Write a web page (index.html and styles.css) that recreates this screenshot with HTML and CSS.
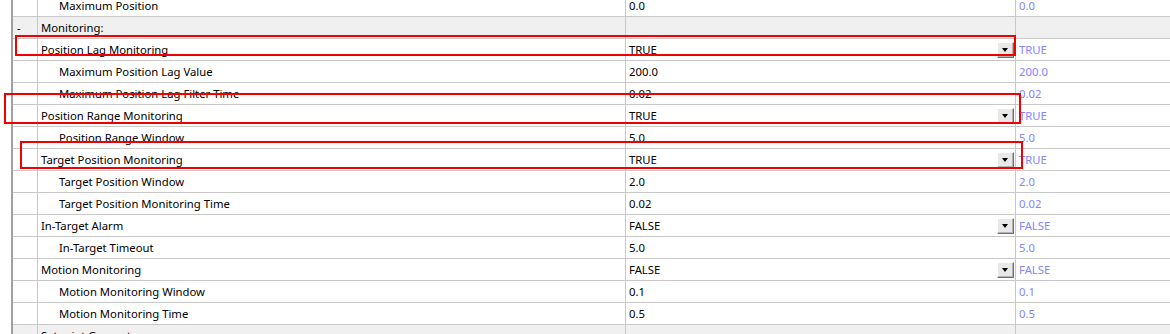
FILE: index.html
```html
<!DOCTYPE html>
<html lang="en">
<head>
    <meta charset="UTF-8">
    <title>Axis Parameters - Monitoring</title>
    <link rel="stylesheet" href="styles.css">
</head>
<body>
    <div class="view">
        <div class="grid">
            <div class="row">
                <div class="exp"></div>
                <div class="name child">Maximum Position</div>
                <div class="value">0.0</div>
                <div class="default">0.0</div>
            </div>
            <div class="row group">
                <div class="exp">-</div>
                <div class="name">Monitoring:</div>
                <div class="value"></div>
                <div class="default"></div>
            </div>
            <div class="row">
                <div class="exp"></div>
                <div class="name">Position Lag Monitoring</div>
                <div class="value"><span>TRUE</span><span class="drop"></span></div>
                <div class="default">TRUE</div>
            </div>
            <div class="row">
                <div class="exp"></div>
                <div class="name child">Maximum Position Lag Value</div>
                <div class="value">200.0</div>
                <div class="default">200.0</div>
            </div>
            <div class="row">
                <div class="exp"></div>
                <div class="name child">Maximum Position Lag Filter Time</div>
                <div class="value">0.02</div>
                <div class="default">0.02</div>
            </div>
            <div class="row">
                <div class="exp"></div>
                <div class="name">Position Range Monitoring</div>
                <div class="value"><span>TRUE</span><span class="drop"></span></div>
                <div class="default">TRUE</div>
            </div>
            <div class="row">
                <div class="exp"></div>
                <div class="name child">Position Range Window</div>
                <div class="value">5.0</div>
                <div class="default">5.0</div>
            </div>
            <div class="row">
                <div class="exp"></div>
                <div class="name">Target Position Monitoring</div>
                <div class="value"><span>TRUE</span><span class="drop"></span></div>
                <div class="default">TRUE</div>
            </div>
            <div class="row">
                <div class="exp"></div>
                <div class="name child">Target Position Window</div>
                <div class="value">2.0</div>
                <div class="default">2.0</div>
            </div>
            <div class="row">
                <div class="exp"></div>
                <div class="name child">Target Position Monitoring Time</div>
                <div class="value">0.02</div>
                <div class="default">0.02</div>
            </div>
            <div class="row">
                <div class="exp"></div>
                <div class="name">In-Target Alarm</div>
                <div class="value"><span>FALSE</span><span class="drop"></span></div>
                <div class="default">FALSE</div>
            </div>
            <div class="row">
                <div class="exp"></div>
                <div class="name child">In-Target Timeout</div>
                <div class="value">5.0</div>
                <div class="default">5.0</div>
            </div>
            <div class="row">
                <div class="exp"></div>
                <div class="name">Motion Monitoring</div>
                <div class="value"><span>FALSE</span><span class="drop"></span></div>
                <div class="default">FALSE</div>
            </div>
            <div class="row">
                <div class="exp"></div>
                <div class="name child">Motion Monitoring Window</div>
                <div class="value">0.1</div>
                <div class="default">0.1</div>
            </div>
            <div class="row">
                <div class="exp"></div>
                <div class="name child">Motion Monitoring Time</div>
                <div class="value">0.5</div>
                <div class="default">0.5</div>
            </div>
            <div class="row group">
                <div class="exp"></div>
                <div class="name">Setpoint Generator:</div>
                <div class="value"></div>
                <div class="default"></div>
            </div>
        </div>

        <!-- red highlight boxes drawn over the grid -->
        <div class="mark mark-lag"></div>
        <div class="mark mark-range"></div>
        <div class="mark mark-target"></div>
    </div>
</body>
</html>
```

FILE: styles.css
```css
* {
    margin: 0;
    padding: 0;
    box-sizing: border-box;
}

body {
    width: 1170px;
    height: 334px;
    overflow: hidden;
    background: #fff;
    font-family: "Noto Sans", "Open Sans", sans-serif;
    font-size: 11.3px;
    color: #000;
}

.view {
    position: relative;
    height: 334px;
    padding-left: 11px;
}

.grid {
    margin-top: -5px;
    border-left: 2px solid #a0a0a0;
}

.row {
    display: grid;
    grid-template-columns: 25px 588px 390px 1fr;
    height: 22px;
    border-bottom: 1px solid #c8c8c8;
}

.row > div {
    display: flex;
    align-items: center;
    white-space: nowrap;
    overflow: hidden;
    border-right: 1px solid #c8c8c8;
    padding-left: 3px;
}

.row > .default {
    border-right: 0;
    color: #8484ff;
}

.group {
    background: #f0f0f0;
}

.exp {
    padding-left: 4px !important;
}

.name.child {
    padding-left: 21px;
}

.value {
    justify-content: space-between;
    padding-right: 1px;
}

.drop {
    flex: none;
    position: relative;
    width: 17px;
    height: 16px;
    background: #e8e8e8;
    border-top: 1px solid #fff;
    border-left: 1px solid #fff;
    border-right: 1px solid #6e6e6e;
    border-bottom: 1px solid #6e6e6e;
    box-shadow: inset -1px -1px 0 #b4b4b4;
}

.drop::after {
    content: "";
    position: absolute;
    left: 4px;
    top: 5px;
    border-left: 3.5px solid transparent;
    border-right: 3.5px solid transparent;
    border-top: 4px solid #000;
}

.mark {
    position: absolute;
    border: 2px solid #f00000;
}

.mark-lag {
    left: 15px;
    top: 40px;
    width: 1001px;
    height: 21px;
}

.mark-range {
    left: 4px;
    top: 98px;
    width: 1017px;
    height: 31px;
}

.mark-target {
    left: 20px;
    top: 146px;
    width: 1003px;
    height: 28px;
}
```
